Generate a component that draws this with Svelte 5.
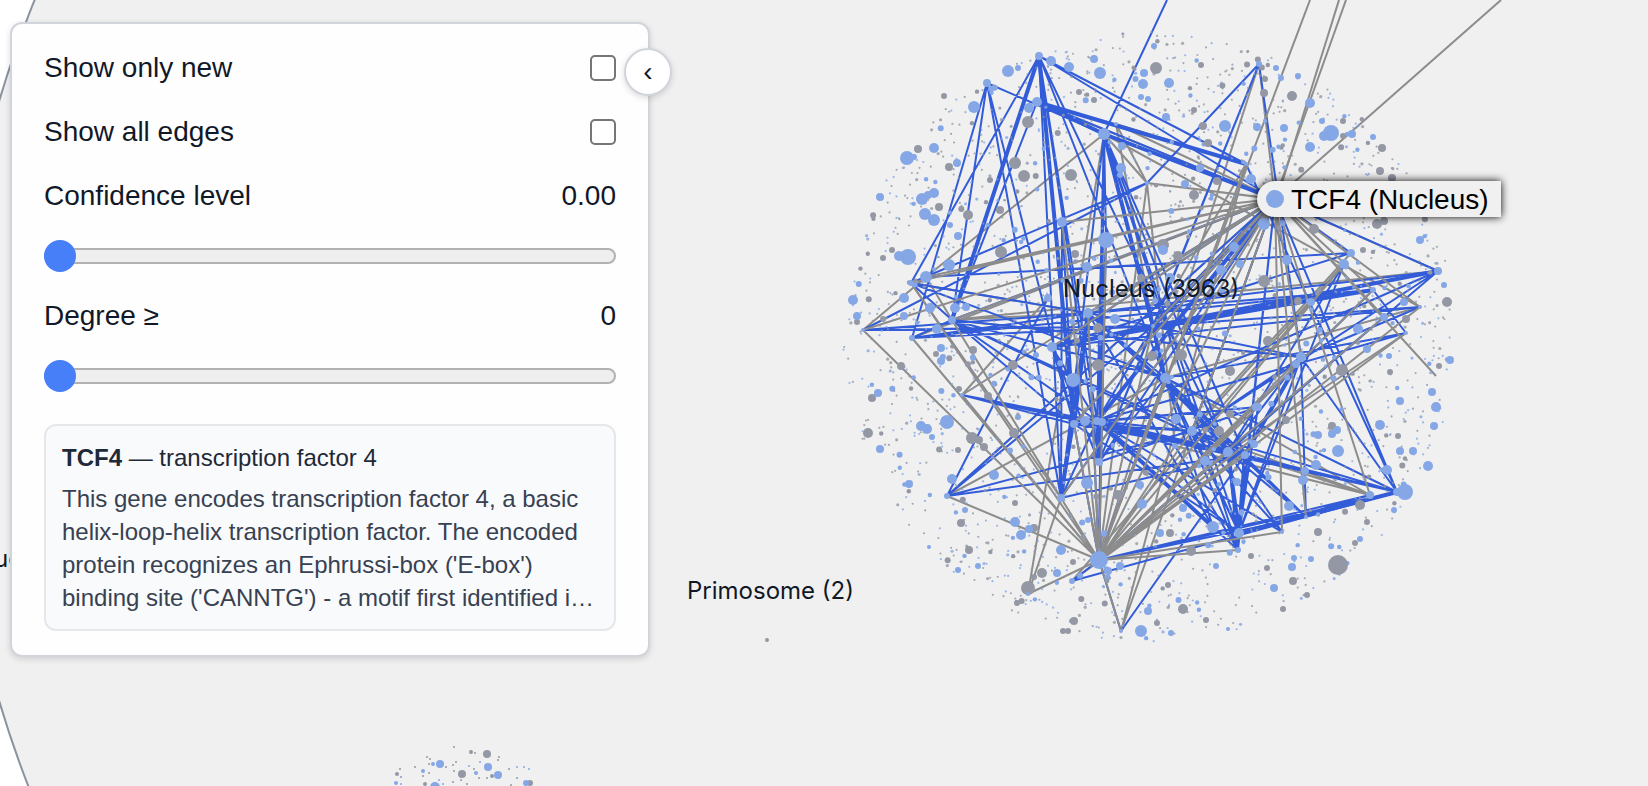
<script lang="ts">
  type Dot = { x: number; y: number; r: number; kind: string };

  let onlyNew = $state(false);
  let allEdges = $state(false);
  let confidence = $state(0);
  let degree = $state(0);
  let collapsed = $state(false);

  // graph nodes that carry edges: x, y, radius
  const nodes: Record<string, [number, number, number]> = {
    tcf: [1275, 199, 9],
    bot: [1099, 560, 9],
    a: [1039, 56, 4],
    b: [987, 83, 4],
    c: [1037, 102, 5],
    d: [1104, 134, 6],
    e: [1106, 240, 8],
    f: [911, 283, 3],
    g: [926, 277, 6],
    h: [863, 330, 2],
    i: [912, 338, 3],
    j: [952, 320, 4],
    k: [962, 395, 2],
    l: [947, 496, 3],
    m: [1061, 498, 4],
    n: [1072, 581, 3],
    o: [1121, 631, 2],
    p: [1238, 550, 3],
    q: [1239, 533, 5],
    r: [1282, 532, 2],
    s: [1306, 517, 2],
    t: [1370, 495, 4],
    u: [1397, 492, 4],
    v: [1420, 307, 2],
    w: [1438, 271, 4],
    x: [1406, 333, 2],
    y: [1351, 253, 4],
    z: [1259, 64, 3],
    a1: [1116, 124, 2],
    b1: [1147, 183, 2],
    c1: [1373, 290, 3],
    d1: [1088, 313, 5],
    e1: [1074, 424, 4],
    f1: [1228, 452, 5],
    g1: [1245, 455, 4],
    h1: [1099, 462, 4],
    i1: [1052, 347, 5],
    j1: [1153, 326, 2],
    k1: [1165, 378, 5],
    l1: [1384, 317, 4],
    m1: [1301, 357, 5],
    n1: [1192, 431, 5],
    o1: [1048, 298, 4],
    p1: [1246, 164, 2],
    q1: [1436, 376, 0],
    r1: [1028, 594, 2],
    s1: [1344, 264, 5],
    t1: [1097, 421, 4],
    u1: [1175, 446, 3],
    v1: [1258, 407, 4],
    w1: [1213, 527, 6],
    x1: [1062, 222, 5],
    top: [1167, 0, 0]
  };

  const greyUnder = `tcf-b1 tcf-d tcf-a1 tcf-c tcf-z tcf-w tcf-i tcf-l d-g d-r1 d-bot d-v d-k1 d-b1
    a1-b1 a1-j1 a1-p1 z-bot b1-bot b1-u1 g-j h-g f-m k-o1 l-k1 n-s1 n-g1 o-p1 r1-m t-g1 t-k1 t-u1 t-n1
    w-j v-k1 x-f1 y-u1 s1-n1 j1-i1 j-d1 f-d1 p1-j1 g1-d1 m1-j tcf-o tcf-k`;

  const blueEdges = `a-f a-j a-m a-e1 a-t1 a-h1 a-k1 a-f1 a-tcf a-p1 b-j b-i b-d b-m b-e1
    c-j c-tcf c-d c-p1 d-top d-tcf d-m d-t1 d-h1 d-f1 d-q d-g1 d-e d-p d-j1 d-k1 z-b1 z-m1 z-h1 z-j1
    tcf-w tcf-y tcf-t1 tcf-e1 tcf-h1 tcf-m tcf-d1 tcf-n1 tcf-j1 tcf-u tcf-p tcf-q tcf-j tcf-i1 tcf-l
    f-b1 f-j f-d1 f-k1 g-y h-b1 h-d1 h-j1 i-j i-c1 i-d1 i-j1 j-m1 j-f1 j-t1 j-g1 j-k1 j-e1
    k-t1 k-f1 k-e1 k-u l-o1 l-j1 l-g1 l-n1 m-e1 m-d1 m-g1 m-t1 w-j1 w-d1 w-bot w-n1 w-t1
    v-m1 v-j1 v-i1 x-t1 x-k1 x-c1 c1-j1 c1-d1 c1-i1 y-i1 s1-f1 s1-q l1-f1 l1-bot
    u-f1 u-g1 u-t1 u-m1 u-n1 u-k1 u-bot u-n u-q u-p1 t-bot t-q q-t1 q-e1 q-f1 q-g1 q-k1 q-n1 q-m1
    p-t1 p-u1 p-f1 p-g1 p-k1 s-d1 s-m1 s-k1 s-f1 s-bot r-t1 r-f1 r-n1 w1-t1 w1-d1 w1-k1
    o-bot o-g1 bot-d1 bot-e1 bot-d bot-e bot-f1 bot-c1 bot-k1 j1-t1 j1-h1 j1-k1 k1-f1 k1-g1
    k1-h1 n1-f1 n1-t1 n1-e1 m1-f1 m1-n1 m1-d1 t1-f1 t1-g1 e1-f1 e1-d1 d1-k1 d1-g1 n-bot t1-u1 h1-v1
    i1-t1 i1-e1 i1-h1 x1-m x1-e1 e-h1 e-t1 v1-t1 v1-e1 v1-q`;

  // pairs that share several interactions are drawn wider
  const blueBundles = `a-j a-e1 c-d c-p1 d-tcf d-j1 j1-i1 j1-c1 j1-w j1-k1 tcf-t1 tcf-j1 t1-f1 e1-d1
    d1-m t1-h1 t1-w1 u-q f1-q g1-q g1-m1 k1-f1`;

  const greyOver = `tcf-g tcf-h tcf-j tcf-f tcf-i1 tcf-v tcf-t tcf-s tcf-r tcf-c1 tcf-l1 tcf-q1 tcf-bot
    tcf-x1 tcf-d1 tcf-k1 tcf-m tcf-e1 tcf-j1 tcf-n1 tcf-m1 h-bot i-bot j-bot f-bot k-bot l-bot m-bot
    r1-bot bot-e bot-d1 bot-x1 bot-j1 bot-k1 bot-e1 bot-m1 bot-v bot-x bot-c1 bot-s1 bot-f1 bot-g1
    bot-n1 bot-u1 bot-v1 bot-r bot-p bot-l1 o-bot bot-p1`;

  const outgoing = [
    [1310, 0, 1099, 560],
    [1339, 0, 1277, 199],
    [1346, 0, 1275, 199],
    [1501, 0, 1275, 199]
  ];

  function toPath(list: string) {
    return list
      .trim()
      .split(/\s+/)
      .map((pair) => {
        const [from, to] = pair.split('-').map((key) => nodes[key]);
        return `M${from[0]} ${from[1]}L${to[0]} ${to[1]}`;
      })
      .join('');
  }

  // the bigger members of each cluster
  const blueBig = [
    [1008, 71, 6], [1018, 68, 3], [1051, 61, 5], [1069, 67, 5], [1100, 73, 6], [1094, 59, 4],
    [974, 107, 6], [1029, 108, 5], [907, 158, 7], [914, 157, 3], [934, 148, 5], [957, 163, 4],
    [922, 199, 6], [928, 195, 4], [934, 193, 5], [880, 197, 4], [925, 214, 6], [934, 220, 6],
    [908, 257, 8], [899, 256, 5], [950, 225, 3], [958, 236, 4], [949, 265, 6], [853, 300, 5],
    [857, 316, 4], [904, 298, 5], [904, 316, 4], [930, 308, 5], [955, 308, 5], [966, 307, 4],
    [937, 329, 5], [941, 348, 4], [941, 361, 4], [878, 393, 4], [947, 422, 7], [921, 426, 5],
    [927, 429, 5], [932, 437, 3], [880, 449, 4], [909, 484, 4], [952, 479, 5], [994, 475, 5],
    [965, 510, 3], [1015, 522, 5], [1021, 535, 5], [1029, 529, 4], [1061, 550, 5], [1057, 573, 4],
    [978, 566, 3], [958, 570, 3], [929, 547, 2], [1087, 483, 6], [1142, 504, 5], [1140, 485, 4],
    [1141, 631, 6], [1148, 611, 4], [1108, 571, 4], [1154, 46, 3], [1169, 83, 5], [1144, 73, 4],
    [1143, 84, 5], [1141, 97, 3], [1166, 117, 4], [1148, 99, 3], [1225, 126, 6], [1257, 127, 4],
    [1276, 68, 3], [1281, 78, 3], [1298, 76, 3], [1310, 103, 5], [1331, 133, 8], [1324, 136, 5],
    [1322, 121, 3], [1352, 134, 4], [1373, 137, 3], [1310, 147, 5], [1284, 128, 4], [1121, 168, 5],
    [1122, 146, 4], [1200, 168, 4], [1185, 184, 4], [1251, 179, 5], [1264, 224, 6], [1234, 247, 5],
    [1163, 250, 5], [1287, 260, 5], [1221, 270, 5], [1240, 264, 4], [1420, 240, 4], [1444, 285, 3],
    [1170, 278, 5], [1087, 267, 5], [1115, 319, 5], [1311, 302, 4], [1404, 302, 4], [1358, 329, 5],
    [1367, 349, 4], [1389, 356, 3], [1450, 360, 4], [1296, 364, 4], [1400, 401, 4], [1432, 392, 4],
    [1436, 407, 5], [1434, 426, 4], [1428, 466, 5], [1380, 425, 5], [1338, 451, 6], [1337, 430, 4],
    [1318, 435, 4], [1332, 434, 4], [1316, 465, 5], [1303, 480, 5], [1305, 471, 4], [1289, 506, 5],
    [1387, 470, 5], [1405, 492, 8], [1400, 451, 4], [1413, 451, 4], [1254, 444, 4], [1292, 567, 4],
    [1294, 558, 3], [1311, 559, 3], [1274, 588, 4], [1394, 510, 3], [1360, 539, 3], [1183, 508, 4],
    [1160, 533, 4], [1216, 566, 3], [1237, 482, 4], [1256, 407, 4], [1171, 633, 3], [1228, 629, 2],
    [1205, 461, 5], [1073, 380, 7], [1120, 566, 4], [1176, 419, 5], [1085, 421, 5], [1102, 422, 4]
  ];
  const greyBig = [
    [1156, 68, 6], [1094, 100, 3], [1079, 92, 3], [1028, 122, 6], [1015, 163, 6], [1024, 176, 6],
    [1071, 175, 6], [949, 167, 4], [918, 149, 4], [944, 96, 3], [939, 207, 4], [968, 215, 5],
    [1000, 210, 4], [1001, 252, 6], [990, 180, 3], [1075, 254, 4], [883, 258, 3], [892, 250, 3],
    [1141, 278, 4], [857, 322, 3], [872, 398, 4], [868, 433, 5], [927, 428, 4], [901, 366, 4],
    [936, 354, 3], [973, 350, 4], [1013, 365, 5], [988, 396, 4], [972, 438, 6], [979, 440, 4],
    [984, 447, 4], [1014, 433, 5], [959, 389, 3], [958, 450, 3], [961, 523, 4], [969, 550, 4],
    [1015, 503, 3], [1034, 528, 4], [1028, 588, 7], [1042, 573, 5], [1034, 577, 3], [1073, 562, 3],
    [1063, 631, 3], [1068, 631, 3], [1074, 621, 4], [1017, 603, 3], [1098, 365, 6], [1098, 328, 5],
    [1152, 356, 5], [1201, 65, 3], [1264, 93, 4], [1265, 79, 3], [1292, 96, 5], [1194, 110, 3],
    [1203, 126, 4], [1208, 143, 4], [1382, 148, 4], [1380, 171, 4], [1392, 178, 4], [1343, 121, 3],
    [1343, 136, 3], [1217, 181, 4], [1194, 195, 5], [1163, 245, 6], [1178, 256, 5], [1377, 224, 5],
    [1384, 221, 4], [1314, 229, 5], [1363, 250, 3], [1264, 281, 6], [1298, 301, 4], [1268, 341, 5],
    [1447, 302, 5], [1406, 319, 4], [1342, 370, 6], [1390, 372, 3], [1439, 366, 3], [1230, 371, 5],
    [1181, 355, 6], [1219, 431, 5], [1230, 414, 4], [1332, 426, 4], [1398, 436, 3], [1360, 505, 5],
    [1338, 565, 10], [1318, 532, 4], [1367, 522, 3], [1355, 543, 3], [1251, 556, 3], [1293, 581, 4],
    [1191, 551, 5], [1170, 533, 4], [1183, 609, 5], [1168, 585, 3], [1206, 620, 3], [1283, 609, 3],
    [1307, 595, 3], [1157, 623, 3], [1267, 568, 3], [1286, 420, 4], [1118, 495, 5]
  ];

  // second, smaller cluster cut by the lower edge of the view
  const lowerBlue = [
    [440, 764, 4], [433, 764, 2], [488, 767, 4], [498, 775, 4], [526, 783, 3], [435, 787, 5],
    [396, 783, 2], [423, 771, 2], [476, 773, 2], [469, 766, 1], [517, 767, 1], [524, 767, 1],
    [529, 769, 1], [480, 762, 1], [443, 784, 1], [439, 780, 1], [401, 784, 1]
  ];
  const lowerGrey = [
    [487, 754, 4], [462, 774, 4], [397, 774, 2], [425, 784, 2], [530, 783, 3], [471, 752, 2],
    [492, 776, 2], [454, 747, 1], [475, 753, 1], [427, 757, 1], [430, 759, 1], [415, 767, 1],
    [400, 769, 1], [401, 777, 1], [429, 764, 1], [453, 765, 1], [456, 762, 1], [454, 771, 1],
    [446, 767, 1], [499, 757, 1], [498, 760, 1], [509, 769, 1], [474, 769, 1], [461, 780, 1],
    [453, 782, 1], [487, 778, 1], [479, 778, 1], [517, 778, 1], [423, 776, 1], [429, 773, 1],
    [467, 784, 1], [511, 785, 1]
  ];

  // small members are spread over the disc with a fixed seed
  function scatter(count: number, cx: number, cy: number, radius: number): Dot[] {
    let seed = 3963;
    const next = () => {
      seed = (seed * 16807) % 2147483647;
      return seed / 2147483647;
    };
    const dots: Dot[] = [];
    for (let n = 0; n < count; n++) {
      const angle = next() * Math.PI * 2;
      const dist = Math.sqrt(next()) * radius;
      const size = next();
      let r = 1.1;
      if (size > 0.78) r = 1.6;
      if (size > 0.88) r = 2.2;
      if (size > 0.96) r = 3;
      dots.push({
        x: cx + Math.cos(angle) * dist,
        y: cy + Math.sin(angle) * dist,
        r,
        kind: next() > (r > 2 ? 0.4 : 0.62) ? 'blue' : 'grey'
      });
    }
    return dots;
  }

  const small = scatter(2300, 1149, 337, 306);
  const fromList = (list: number[][], kind: string): Dot[] => list.map(([x, y, r]) => ({ x, y, r, kind }));
  const big = [
    ...fromList(greyBig, 'grey'),
    ...fromList(blueBig, 'blue'),
    ...fromList(lowerGrey, 'grey'),
    ...fromList(lowerBlue, 'blue'),
    ...fromList(Object.values(nodes).filter((node) => node[2] > 0), 'blue'),
    { x: 767, y: 640, r: 2, kind: 'grey' }
  ];
</script>

<main class="viewer">
  <svg class="graph" aria-label="Protein interaction graph">
    <circle class="cell" cx="1018" cy="401" r="1062" />
    <path class="edge grey" d={toPath(greyUnder)} />
    <path class="edge blue" d={toPath(blueEdges)} />
    <path class="edge blue bundle" d={toPath(blueBundles)} />
    <path class="edge grey" d={toPath(greyOver)} />
    {#each outgoing as [x1, y1, x2, y2]}
      <line class="edge grey" {x1} {y1} {x2} {y2} />
    {/each}
    {#each small as dot}
      <circle class="dot {dot.kind}" class:tiny={dot.r < 2} cx={dot.x} cy={dot.y} r={dot.r} />
    {/each}
    {#each big as dot}
      <circle class="dot {dot.kind}" cx={dot.x} cy={dot.y} r={dot.r} />
    {/each}
    <text class="label" x="1063" y="297">Nucleus (3963)</text>
    <text class="label" x="687" y="599">Primosome (2)</text>
    <text class="label" x="-6" y="567">uc</text>
    <g class="hover">
      <path class="hover-box" d="M1501 181H1275a18 18 0 0 0 0 36H1501Z" />
      <circle class="dot blue" cx="1275" cy="199" r="9" />
      <text x="1291" y="209">TCF4 (Nucleus)</text>
    </g>
  </svg>

  <aside class="panel" class:collapsed>
    <button
      class="toggle"
      type="button"
      aria-expanded={!collapsed}
      onclick={() => (collapsed = !collapsed)}>{collapsed ? '›' : '‹'}</button>
    {#if !collapsed}
      <label class="row">
        <span>Show only new</span>
        <input type="checkbox" bind:checked={onlyNew} />
      </label>
      <label class="row">
        <span>Show all edges</span>
        <input type="checkbox" bind:checked={allEdges} />
      </label>
      <div class="row">
        <label for="confidence">Confidence level</label>
        <output for="confidence">{confidence.toFixed(2)}</output>
      </div>
      <input id="confidence" type="range" min="0" max="1" step="0.01" bind:value={confidence} />
      <div class="row">
        <label for="degree">Degree ≥</label>
        <output for="degree">{degree}</output>
      </div>
      <input id="degree" type="range" min="0" max="100" bind:value={degree} />
      <section class="gene">
        <p class="title"><strong>TCF4</strong> — transcription factor 4</p>
        <p class="summary">
          This gene encodes transcription factor 4, a basic helix-loop-helix transcription factor. The
          encoded protein recognizes an Ephrussi-box ('E-box') binding site ('CANNTG') - a motif first
          identified i…
        </p>
      </section>
    {/if}
  </aside>
</main>

<style>
  :global(body) {
    background: #fff;
  }

  .viewer {
    position: relative;
    min-height: 100vh;
    box-sizing: border-box;
    padding: 22px 10px;
    overflow: hidden;
    font-family: 'Liberation Sans', Arial, sans-serif;
    color: #111827;
  }

  .graph {
    position: absolute;
    inset: 0;
    width: 100%;
    height: 100%;
  }

  .cell {
    fill: #f0f0f0;
    stroke: #8b93a0;
    stroke-width: 2;
  }

  .edge {
    fill: none;
    stroke-width: 2;
  }
  .edge.blue { stroke: #335cd9; }
  .edge.grey { stroke: #8c8c8c; }
  .edge.bundle { stroke-width: 4; }

  .dot.blue { fill: #85a7e6; }
  .dot.grey { fill: #9398a4; }
  .tiny { opacity: 0.8; }

  .label {
    font-family: Inter, sans-serif;
    font-size: 24px;
    fill: #111827;
  }

  .hover-box {
    fill: #f0f0f0;
    filter: drop-shadow(0 0 4px #000);
  }

  .hover text {
    font-size: 28px;
    fill: #000;
  }

  .panel {
    position: relative;
    display: flex;
    flex-direction: column;
    gap: 24px;
    box-sizing: border-box;
    width: 640px;
    max-width: 100%;
    padding: 24px 32px;
    border: 2px solid #d1d5db;
    border-radius: 12px;
    background: #fefefe;
    box-shadow: 0 2px 6px rgba(0, 0, 0, 0.14);
    font-size: 28px;
    line-height: 40px;
  }

  .panel.collapsed {
    width: 48px;
    min-height: 96px;
  }

  .toggle {
    position: absolute;
    top: 24px;
    right: -24px;
    width: 48px;
    height: 48px;
    padding: 0;
    border: 2px solid #d1d5db;
    border-radius: 50%;
    background: #fff;
    box-shadow: 0 2px 6px rgba(0, 0, 0, 0.14);
    font-family: inherit;
    font-size: 28px;
    line-height: 40px;
    color: #111827;
  }

  .row {
    display: flex;
    align-items: center;
    justify-content: space-between;
  }

  input {
    appearance: none;
    margin: 0;
  }

  input[type='checkbox'] {
    width: 26px;
    height: 26px;
    border: 2px solid #767676;
    border-radius: 5px;
    background: #fff;
  }

  input[type='checkbox']:checked {
    background: #477ff9;
  }

  input[type='range'] {
    width: 100%;
    height: 32px;
    background: transparent;
  }

  input[type='range']::-webkit-slider-runnable-track {
    box-sizing: border-box;
    height: 16px;
    border: 2px solid #b2b2b2;
    border-radius: 8px;
    background: #efefef;
  }

  input[type='range']::-webkit-slider-thumb {
    appearance: none;
    width: 32px;
    height: 32px;
    margin: -10px -2px 0;
    border-radius: 50%;
    background: #477ff9;
  }

  .gene {
    margin-top: 8px;
    padding: 15px 16px;
    border: 2px solid #e5e7eb;
    border-radius: 12px;
    background: #f9fafc;
    font-size: 24px;
    line-height: 33px;
  }

  .gene p {
    margin: 0;
  }

  .title {
    color: #1f2937;
  }

  .gene .summary {
    margin-top: 8px;
    color: #374151;
  }
</style>
